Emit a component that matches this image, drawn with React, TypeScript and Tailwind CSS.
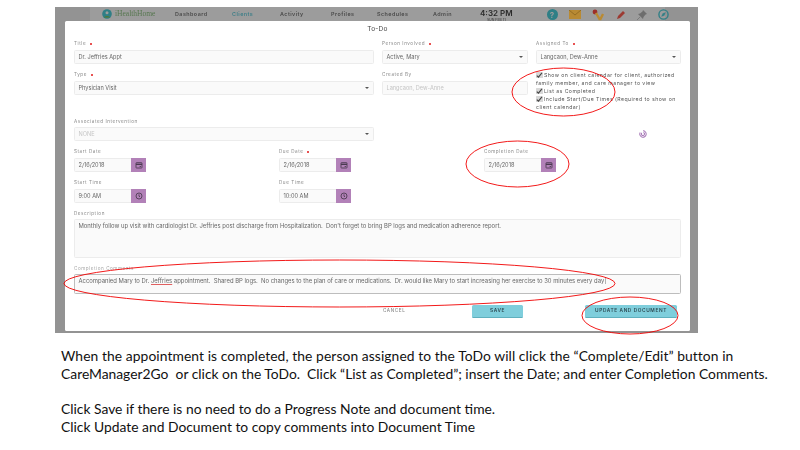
import React from "react";

const font = { fontFamily: "Inter, 'Open Sans', sans-serif" };

function Label({ text, req }: { text: string; req?: boolean }) {
  return (
    <div className="h-[9px] mb-[2px] flex items-center gap-[4px] text-[4.6px] tracking-[0.55px] leading-[8px] text-[#8a8a8a] whitespace-nowrap">
      <span>{text}</span>
      {req && <span className="w-[2px] h-[2px] rounded-full bg-[#e01818]" />}
    </div>
  );
}

function Caret() {
  return <span className="w-0 h-0 border-l-[2px] border-r-[2px] border-t-[2px] border-l-transparent border-r-transparent border-t-[#555]" />;
}

function Box({ children, select, faded }: { children?: React.ReactNode; select?: boolean; faded?: boolean }) {
  return (
    <div className={`h-[14px] rounded-[1.5px] border border-[#ececec] bg-[#fafafa] pl-[3.5px] pr-[4px] flex items-center justify-between text-[5.6px] whitespace-nowrap ${faded ? "text-[#c4c4c4]" : "text-[#666]"}`}>
      <span>{children}</span>
      {select && <Caret />}
    </div>
  );
}

function CalIcon() {
  return (
    <svg width="8" height="8" viewBox="0 0 24 24" fill="none" stroke="#4a3a50" strokeWidth="2.6">
      <rect x="3" y="5" width="18" height="16" rx="1.5" />
      <path d="M3 10h18" strokeWidth="4" />
      <rect x="14" y="15" width="3.5" height="3" fill="#4a3a50" stroke="none" />
    </svg>
  );
}

function ClockIcon() {
  return (
    <svg width="8" height="8" viewBox="0 0 24 24" fill="none" stroke="#4a3a50" strokeWidth="2.6">
      <circle cx="12" cy="12" r="9" />
      <path d="M12 7v5.5l3 2" />
    </svg>
  );
}

function Picker({ label, value, req, icon }: { label: string; value: string; req?: boolean; icon: React.ReactNode }) {
  return (
    <div className="w-[72px]">
      <Label text={label} req={req} />
      <div className="h-[14px] flex rounded-[1.5px] border border-[#ececec] bg-[#fafafa]">
        <span className="flex-1 pl-[3.5px] flex items-center text-[5.6px] text-[#666] whitespace-nowrap">{value}</span>
        <span className="w-[15px] -my-px -mr-px bg-[#b281b8] flex items-center justify-center">{icon}</span>
      </div>
    </div>
  );
}

function Check() {
  return (
    <span className="inline-flex align-[-1px] w-[6.5px] h-[6px] mr-[1.5px] bg-[#d8d8d8] rounded-[0.5px] items-center justify-center">
      <svg width="6.500" height="6.500" viewBox="0 0 12 12" fill="none" stroke="#444" strokeWidth="2"><path d="M1.5 6.5 4.5 9.5 11 1.5" /></svg>
    </span>
  );
}

function Nav({ text, active, className }: { text: string; active?: boolean; className: string }) {
  return <span className={`text-[5.4px] font-semibold tracking-[0.45px] whitespace-nowrap ${active ? "text-[#3f7f88]" : "text-[#4a4a4a]"} ${className}`}>{text}</span>;
}

function HeaderIcons() {
  return (
    <div className="flex items-center gap-[11px] ml-[34px] mt-[1px]">
      <span className="w-[11px] h-[11px] rounded-full bg-[#2f7f86] flex items-center justify-center text-[8px] font-bold leading-none text-[#9c9c9c]">?</span>
      <svg width="12" height="9" viewBox="0 0 12 9"><rect width="12" height="9" fill="#b98a33" /><path d="M0 0l6 5 6-5" fill="none" stroke="#8c6620" strokeWidth="0.8" /></svg>
      <svg width="13" height="12" viewBox="0 0 13 12"><circle cx="3" cy="3" r="2.4" fill="#9c2f2a" /><path d="M4 4l4 7M8 11l3-6" stroke="#b98a33" strokeWidth="2.4" fill="none" /></svg>
      <svg width="10" height="10" viewBox="0 0 10 10"><path d="M1 9l1-3 5-5 2 2-5 5z" fill="#9c3a32" /></svg>
      <svg width="10" height="10" viewBox="0 0 10 10" fill="#6d6d6d"><path d="M6 0l4 4-1.5.5L6.5 7l-.5 2-5-5 2-.5L5.5 1.500z" /><path d="M3 7 0 10" stroke="#6d6d6d" strokeWidth="0.7" /></svg>
      <svg width="11" height="11" viewBox="0 0 24 24" fill="none" stroke="#2f7f86" strokeWidth="3"><circle cx="12" cy="12" r="10" /><path d="M16 8l-2.500 6-5.500 2 2.500-6z" fill="#2f7f86" strokeWidth="1" /></svg>
    </div>
  );
}

export default function App() {
  return (
    <div className="w-[800px] h-[450px] bg-white overflow-hidden pt-[7px] pl-[55px]" style={font}>
      <div className="relative w-[643px] h-[326px]">
        <div className="h-full bg-[#939393] blur-[0.35px] overflow-hidden">
          <div className="ml-[35px] w-[575px] h-[14px] bg-[#9c9c9c] flex items-center overflow-visible">
            <svg className="ml-[12px] shrink-0" width="10" height="10" viewBox="0 0 10 10"><circle cx="5" cy="5" r="4.800" fill="#2f7f86" /><circle cx="5" cy="3.800" r="1.500" fill="#9c9c9c" /><path d="M2 8.500c.5-2 5.500-2 6 0z" fill="#4f7a3a" /></svg>
            <span className="ml-[3px] w-[60px] shrink-0 text-[7.500px] text-[#56774f] whitespace-nowrap" style={{ fontFamily: "'Liberation Serif', serif" }}>iHealthHome</span>
            <Nav text="Dashboard" className="w-[57px] shrink-0" />
            <Nav text="Clients" active className="w-[48px] shrink-0" />
            <Nav text="Activity" className="w-[51px] shrink-0" />
            <Nav text="Profiles" className="w-[46px] shrink-0" />
            <Nav text="Schedules" className="w-[56px] shrink-0" />
            <Nav text="Admin" className="w-[47px] shrink-0" />
            <div className="shrink-0 flex flex-col items-center h-[14px] pt-[2px]">
              <span className="text-[8px] leading-[9px] font-semibold text-[#2a2a2a] whitespace-nowrap">4:32 PM</span>
              <span className="text-[3.5px] leading-[4px] text-[#333] whitespace-nowrap">SUN FEB 11</span>
            </div>
            <HeaderIcons />
          </div>
          <div className="ml-[10px] w-[625px] h-[310px] bg-white rounded-[1.5px] px-[9px] text-[#666]">
            <div className="h-[18px] flex items-center justify-center text-[6.6px] tracking-[0.2px] text-[#444]">To-Do</div>
            <div className="grid grid-cols-[300px_146px_145px] gap-x-[8px]">
              <div>
                <Label text="Title" req />
                <Box>Dr. Jeffries Appt</Box>
              </div>
              <div>
                <Label text="Person Involved" req />
                <Box select>Active, Mary</Box>
              </div>
              <div>
                <Label text="Assigned To" req />
                <Box select>Langcaon, Dew-Anne</Box>
              </div>
              <div className="mt-[6px]">
                <Label text="Type" req />
                <Box select>Physician Visit</Box>
              </div>
              <div className="mt-[6px]">
                <Label text="Created By" />
                <Box faded>Langcaon, Dew-Anne</Box>
              </div>
              <div className="row-span-2 mt-[7px] text-[5.2px] leading-[8px] tracking-[0.43px] text-[#555] h-[42px]">
                <div><Check />Show on client calendar for client, authorized family member, and care manager to view</div>
                <div><Check />List as Completed</div>
                <div><Check />Include Start/Due Times (Required to show on client calendar)</div>
              </div>
              <div className="mt-[22px] col-span-2 relative">
                <div className="w-[300px]">
                  <div className="h-[9px] mb-[1px] text-[4.6px] tracking-[0.55px] leading-[9px] text-[#8a8a8a]">Associated Intervention</div>
                  <Box select faded>NONE</Box>
                </div>
              </div>
            </div>
            <div className="relative grid grid-cols-[205px_205px_72px] mt-[6px]">
              <Picker label="Start Date" value="2/16/2018" icon={<CalIcon />} />
              <Picker label="Due Date" req value="2/16/2018" icon={<CalIcon />} />
              <Picker label="Completion Date" value="2/16/2018" icon={<CalIcon />} />
              <svg className="absolute left-[565px] -top-[17px]" width="8" height="8" viewBox="0 0 10 10" fill="none" stroke="#a87ab8" strokeWidth="1.300"><path d="M5 1a4 4 0 1 1-3.500 2" /><path d="M3.500 3.500a2 2 0 1 0 2-.5" /></svg>
            </div>
            <div className="grid grid-cols-[205px_205px] mt-[6px]">
              <Picker label="Start Time" value="9:00 AM" icon={<ClockIcon />} />
              <Picker label="Due Time" value="10:00 AM" icon={<ClockIcon />} />
            </div>
            <div className="mt-[6px]">
              <div className="h-[9px] mb-[1px] text-[4.6px] tracking-[0.55px] leading-[9px] text-[#8a8a8a]">Description</div>
              <div className="h-[39px] rounded-[1.5px] border border-[#ececec] bg-[#fafafa] px-[3.5px] pt-[2px] text-[5.9px] leading-[8px] text-[#666] whitespace-pre">Monthly follow up visit with cardiologist Dr. Jeffries post discharge from Hospitalization.  Don't forget to bring BP logs and medication adherence report.</div>
            </div>
            <div className="mt-[6px]">
              <div className="h-[9px] mb-[1px] text-[4.6px] tracking-[0.55px] leading-[9px] text-[#a8a8a8]">Completion Comments</div>
              <div className="h-[20px] rounded-[1.5px] border border-[#bdbdbd] bg-[#fafafa] px-[3.5px] pt-[2px] text-[5.9px] leading-[8px] text-[#666] whitespace-pre">Accompanied Mary to Dr. <span className="underline decoration-[#e06060]">Jeffries</span> appointment.  Shared BP logs.  No changes to the plan of care or medications.  Dr. would like Mary to start increasing her exercise to 30 minutes every day|</div>
            </div>
            <div className="mt-[11px] pl-[309px] flex items-center">
              <span className="w-[23px] text-[4.6px] font-medium tracking-[0.6px] text-[#8a8a8a]">CANCEL</span>
              <span className="ml-[66px] w-[51px] h-[13px] rounded-[1.5px] bg-[#7fcedc] border-b border-[#5fb0be] flex items-center justify-center text-[4.8px] font-semibold tracking-[0.6px] text-[#2c4a52]">SAVE</span>
              <span className="ml-[62px] w-[92px] h-[13px] rounded-[1.5px] bg-[#7fcedc] border-b border-[#5fb0be] flex items-center justify-center text-[4.8px] font-semibold tracking-[0.6px] text-[#2c4a52] whitespace-nowrap">UPDATE AND DOCUMENT</span>
            </div>
          </div>
        </div>
        <svg className="absolute left-0 top-0 overflow-visible pointer-events-none" width="643" height="326" fill="none" stroke="#f00000" strokeWidth="0.9">
          <ellipse cx="508.500" cy="85" rx="51.500" ry="24" />
          <ellipse cx="462.500" cy="157" rx="51.500" ry="23" />
          <ellipse cx="284.500" cy="276.500" rx="275.500" ry="23.500" />
          <ellipse cx="575" cy="308.500" rx="48" ry="18.500" />
        </svg>
      </div>
      <div className="ml-[6px] mt-[14px] w-[720px] text-[13.850px] leading-[17.800px] text-[#111] whitespace-pre" style={{ fontFamily: "Lato, 'Open Sans', sans-serif" }}>
        <p className="tracking-[0.075px]">When the appointment is completed, the person assigned to the ToDo will click the “Complete/Edit” button in</p>
        <p>CareManager2Go  or click on the ToDo.  Click “List as Completed”; insert the Date; and enter Completion Comments.</p>
        <p className="h-[17.800px]" />
        <p>Click Save if there is no need to do a Progress Note and document time.</p>
        <p>Click Update and Document to copy comments into Document Time</p>
      </div>
    </div>
  );
}
